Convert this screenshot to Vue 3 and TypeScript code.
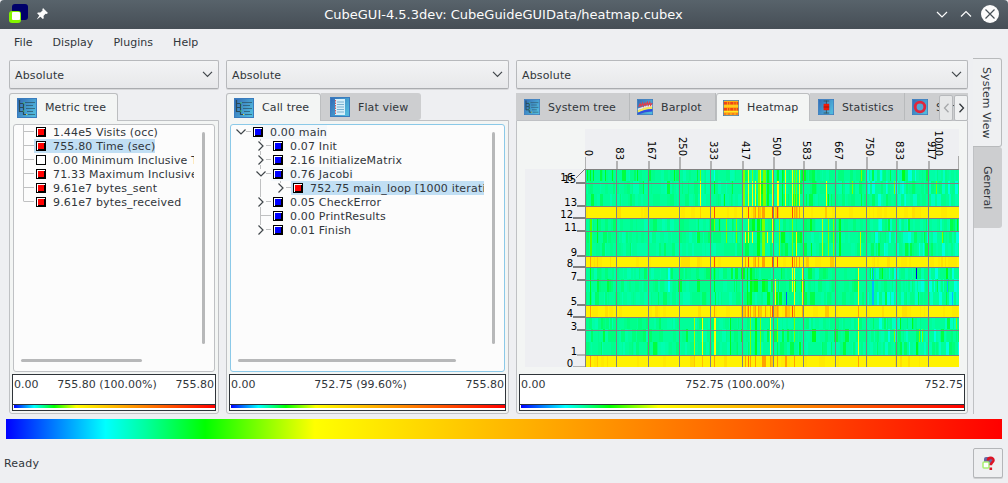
<script setup lang="ts">
interface TreeRow { label: string; depth: number; color: string; state?: 'open' | 'closed'; mark?: 'selected' | 'soft' }
interface Mark { x: number; rows: number[]; color: string; w?: number }

const metrics: TreeRow[] = [
  { label: '1.44e5 Visits (occ)', depth: 0, color: '#f00' },
  { label: '755.80 Time (sec)', depth: 0, color: '#f00', mark: 'selected' },
  { label: '0.00 Minimum Inclusive Time (sec)', depth: 0, color: '#fff' },
  { label: '71.33 Maximum Inclusive Time (sec)', depth: 0, color: '#f00' },
  { label: '9.61e7 bytes_sent', depth: 0, color: '#f00' },
  { label: '9.61e7 bytes_received', depth: 0, color: '#f00' },
]
const calls: TreeRow[] = [
  { label: '0.00 main', depth: 0, color: '#00f', state: 'open', mark: 'soft' },
  { label: '0.07 Init', depth: 1, color: '#00f', state: 'closed' },
  { label: '2.16 InitializeMatrix', depth: 1, color: '#00f', state: 'closed' },
  { label: '0.76 Jacobi', depth: 1, color: '#00f', state: 'open', mark: 'soft' },
  { label: '752.75 main_loop [1000 iterations]', depth: 2, color: '#f00', state: 'closed', mark: 'selected' },
  { label: '0.05 CheckError', depth: 1, color: '#00f', state: 'closed' },
  { label: '0.00 PrintResults', depth: 1, color: '#00f' },
  { label: '0.01 Finish', depth: 1, color: '#00f', state: 'closed' },
]
const menus = ['File', 'Display', 'Plugins', 'Help']

const panels = [
  { id: 'metric', tabs: [{ t: 'Metric tree', i: 'tree', on: true }], rows: metrics, min: '0.00', mid: '755.80 (100.00%)', max: '755.80' },
  { id: 'call', tabs: [{ t: 'Call tree', i: 'tree', on: true }, { t: 'Flat view', i: 'flat', on: false }], rows: calls, min: '0.00', mid: '752.75 (99.60%)', max: '755.80' },
  {
    id: 'system',
    tabs: [{ t: 'System tree', i: 'tree', on: false }, { t: 'Barplot', i: 'bar', on: false }, { t: 'Heatmap', i: 'heat', on: true }, { t: 'Statistics', i: 'stat', on: false }, { t: 'Sunburst', i: 'sun', on: false }],
    rows: [] as TreeRow[], min: '0.00', mid: '752.75 (100.00%)', max: '752.75',
  },
]

/* Heatmap: 16 rows from top to bottom, every fourth one is hot. */
const left = 60
const edges = [40, 52, 65, 77, 89, 102, 114, 127, 138, 150, 163, 176, 188, 200, 213, 226, 238]
const gridX = [60, 91, 123, 154, 185, 217, 248, 278, 310, 341, 371, 403]
const gridY = [40, 54, 77, 89, 102, 127, 138, 151, 176, 188, 201, 226]
const Y = '#ff0', L = '#7dff00', G = '#00ff1c', O = '#ffa200', R = '#ff4a00', C = '#00fff0', A = '#00b8ff'
const a = [0, 1, 2], b = [4, 5, 6], c = [8, 9, 10], d = [12, 13, 14]
const marks: Mark[] = [
  ...[62, 65, 68, 80, 87, 112, 149].map(x => ({ x, rows: [0], color: G })),
  { x: 189, rows: [0], color: C }, { x: 175, rows: [0], color: L }, { x: 175, rows: [1, 2], color: Y },
  { x: 189, rows: [1], color: G }, { x: 199, rows: [2], color: G },
  { x: 218, rows: a, color: L, w: 2 }, { x: 223, rows: a, color: Y }, { x: 227, rows: [1, 2], color: Y }, { x: 230, rows: [1, 2], color: Y },
  { x: 227, rows: [0], color: L }, { x: 233, rows: a, color: L, w: 2 }, { x: 235, rows: a, color: Y }, { x: 238, rows: a, color: L, w: 3 }, { x: 242, rows: a, color: G, w: 2 },
  { x: 247, rows: a, color: Y }, { x: 252, rows: [1, 2], color: Y, w: 2 }, { x: 260, rows: a, color: Y }, { x: 257, rows: a, color: G },
  { x: 267, rows: a, color: Y }, { x: 269, rows: a, color: L }, { x: 271, rows: a, color: L }, { x: 274, rows: a, color: Y },
  { x: 301, rows: [1, 2], color: Y }, { x: 303, rows: [2], color: G }, { x: 336, rows: [0], color: L }, { x: 327, rows: [1], color: L },
  { x: 369, rows: [1], color: L }, { x: 411, rows: [1], color: L }, { x: 377, rows: [0], color: G, w: 3 },
  { x: 65, rows: b, color: '#50ff00', w: 2 }, { x: 72, rows: [4, 5], color: G }, { x: 189, rows: [4], color: L }, { x: 194, rows: [4], color: G },
  { x: 201, rows: [4, 5], color: L }, { x: 211, rows: [4, 5], color: L }, { x: 220, rows: [5], color: Y }, { x: 223, rows: [4, 5], color: Y },
  { x: 227, rows: [5], color: Y }, { x: 232, rows: b, color: G, w: 3 }, { x: 237, rows: b, color: L, w: 3 }, { x: 242, rows: [5], color: Y },
  { x: 247, rows: [4, 5], color: Y }, { x: 254, rows: b, color: L }, { x: 267, rows: b, color: L }, { x: 271, rows: [5, 6], color: Y },
  { x: 297, rows: b, color: '#c0ff00' }, { x: 303, rows: b, color: L }, { x: 308, rows: b, color: L }, { x: 314, rows: b, color: G, w: 2 },
  { x: 335, rows: [5, 6], color: '#c0ff00' }, { x: 417, rows: [5], color: L }, { x: 432, rows: [4], color: G },
  { x: 65, rows: c, color: G }, { x: 143, rows: [8, 9], color: C, w: 2 }, { x: 189, rows: [8, 9], color: G },
  { x: 222, rows: c, color: G }, { x: 225, rows: c, color: G, w: 2 }, { x: 250, rows: [9, 10], color: Y }, { x: 261, rows: [10], color: '#0058ff' },
  { x: 267, rows: [8, 9], color: Y }, { x: 269, rows: c, color: Y }, { x: 277, rows: c, color: Y }, { x: 333, rows: c, color: Y },
  { x: 348, rows: [8], color: A }, { x: 347, rows: [9, 10], color: A, w: 2 }, { x: 357, rows: [8], color: G }, { x: 391, rows: [8], color: '#0000e8' },
  { x: 421, rows: [8], color: G, w: 2 }, { x: 422, rows: [9], color: A }, { x: 427, rows: [10], color: A },
  { x: 169, rows: d, color: '#a8ff00' }, { x: 177, rows: d, color: Y }, { x: 189, rows: d, color: Y, w: 2 }, { x: 205, rows: d, color: G },
  { x: 225, rows: d, color: L }, { x: 230, rows: d, color: G, w: 2 }, { x: 235, rows: d, color: L }, { x: 245, rows: d, color: Y, w: 1 },
  { x: 252, rows: [12, 13], color: L }, { x: 269, rows: [12, 13], color: L }, { x: 333, rows: d, color: Y }, { x: 369, rows: [13], color: L },
  { x: 375, rows: [12], color: G }, { x: 387, rows: [12], color: G }, { x: 394, rows: [13], color: L }, { x: 397, rows: [13], color: L }, { x: 431, rows: [12], color: L },
  { x: 391, rows: [14], color: G, w: 2 },
  { x: 175, rows: [3], color: '#ffd000' }, { x: 169, rows: [15], color: '#ffc800' }, { x: 177, rows: [15], color: '#ffc000' }, { x: 189, rows: [3, 7], color: R }, { x: 223, rows: [3, 7], color: R },
  { x: 233, rows: [3, 7, 11], color: O }, { x: 237, rows: [3, 7, 15], color: O, w: 3 }, { x: 247, rows: [3, 7, 11], color: R }, { x: 252, rows: [3, 7], color: R },
  { x: 267, rows: [3, 7, 11], color: R }, { x: 269, rows: [3, 7, 11, 15], color: O }, { x: 271, rows: [3, 7], color: O }, { x: 274, rows: [3, 7], color: O },
  { x: 301, rows: [3, 11], color: '#ffc800' }, { x: 65, rows: [7, 11, 15], color: O }, { x: 72, rows: [7, 15], color: '#ffd000' },
  { x: 189, rows: [11, 15], color: O }, { x: 225, rows: [11, 15], color: O }, { x: 220, rows: [7, 11, 15], color: O }, { x: 230, rows: [3, 7, 11, 15], color: O },
  { x: 228, rows: [3, 7, 11], color: '#ffc800', w: 2 }, { x: 223, rows: [11, 15], color: '#ff7a00' }, { x: 240, rows: [11, 15], color: O },
  { x: 245, rows: [15, 11], color: O }, { x: 252, rows: [11, 15], color: O }, { x: 260, rows: [11, 15], color: O, w: 2 }, { x: 277, rows: [11], color: O }, { x: 333, rows: [11, 15], color: O },
]

function heatPaths(): { color: string; d: string }[] {
  let seed = 4177
  const rnd = () => (seed = (seed * 16807) % 2147483647) / 2147483647
  const out = new Map<string, string>()
  const put = (color: string, x: number, row: number, w: number) => {
    const y = edges[row], h = edges[row + 1] - y
    out.set(color, (out.get(color) ?? '') + `M${x} ${y}h${w}v${h}h${-w}z`)
  }
  const cool = ['#00ff99', '#00ff8c', '#00ffa6', '#00ff7d', '#00ffb0', '#00ff68']
  for (let row = 0; row < 16; row++) {
    let x = left
    while (x < 434) {
      const w = Math.min(434 - x, 1 + Math.floor(rnd() * (x > 340 ? 3 : 4)))
      const r = rnd()
      let color: string
      if (row % 4 === 3) color = r < 0.75 ? '#fff200' : r < 0.93 ? '#ffea00' : x > 215 && x < 340 ? '#ffc800' : '#ffe000'
      else if (x > 340 && r > 0.76) color = r > 0.95 ? '#00ff48' : r > 0.86 ? '#00ffe0' : '#00ffc4'
      else if (x > 215 && x < 290 && r > 0.8) color = r > 0.93 ? '#00ff24' : '#00ff4c'
      else if (r > 0.975) color = '#00ff40'
      else color = cool[Math.min(5, Math.floor(rnd() * rnd() * 7))]
      put(color, x, row, w)
      x += w
    }
  }
  const paths = [...out].map(([color, d]) => ({ color, d }))
  for (const m of marks) {
    for (const row of m.rows) {
      const w = m.w ?? 1
      paths.push({ color: m.color, d: `M${m.x} ${edges[row]}h${w}v${edges[row + 1] - edges[row]}h${-w}z` })
    }
  }
  return paths
}
const heat = heatPaths()

const xLabels = [
  { t: '0', x: 60, e: 27 }, { t: '83', x: 91, e: 31 }, { t: '167', x: 123, e: 31 }, { t: '250', x: 154, e: 27 }, { t: '333', x: 185, e: 31 },
  { t: '417', x: 217, e: 31 }, { t: '500', x: 248, e: 27 }, { t: '583', x: 278, e: 31 }, { t: '667', x: 310, e: 31 }, { t: '750', x: 341, e: 27 },
  { t: '833', x: 371, e: 31 }, { t: '917', x: 403, e: 31 }, { t: '1000', x: 410, e: 27 },
]
const yLabels = [
  { t: '16', y: 53, x: 48 }, { t: '15', y: 55, x: 51 }, { t: '13', y: 78, x: 52 }, { t: '12', y: 90, x: 48 }, { t: '11', y: 103, x: 52 }, { t: '9', y: 128, x: 52 },
  { t: '8', y: 139, x: 48 }, { t: '7', y: 152, x: 52 }, { t: '5', y: 177, x: 52 }, { t: '4', y: 189, x: 48 }, { t: '3', y: 202, x: 52 }, { t: '1', y: 227, x: 52 }, { t: '0', y: 239, x: 48 },
]
</script>

<template>
  <div class="window">
    <header class="titlebar">
      <svg class="logo" width="50" height="29" viewBox="0 0 50 29">
        <rect x="12" y="4" width="16" height="16" rx="3" fill="#00006a" />
        <rect x="9" y="11" width="12" height="12" rx="3" fill="#82f400" />
        <rect x="12" y="12" width="8" height="8" rx="1" fill="#fff" />
        <path d="M43 8l5 5-1.500 1-1-.2-2 2.200.3 2.300-1 .8-2.400-2.400-3.200 2.500-.2-.3 2.300-3.300-2.200-2.300.9-.9 2.300.2 2.300-2-.3-.8z" fill="#fcfcfc" />
      </svg>
      <span class="title">CubeGUI-4.5.3dev: CubeGuideGUIData/heatmap.cubex</span>
      <svg class="controls" width="76" height="29" viewBox="0 0 76 29" fill="none" stroke="#fcfcfc" stroke-width="1.200">
        <path d="M5 12l5 5 5-5M29 16.500l5-5 5 5" />
        <circle cx="58" cy="14" r="9" fill="#fcfcfc" stroke="none" />
        <path d="M53.500 9.500l9 9m0-9l-9 9" stroke="#475057" />
      </svg>
    </header>

    <nav class="menu"><span v-for="m in menus" :key="m">{{ m }}</span></nav>

    <main class="work">
      <section v-for="p in panels" :key="p.id" class="panel" :class="p.id">
        <div class="combo">
          <span>Absolute</span>
          <svg width="11" height="7" viewBox="0 0 11 7"><path d="M1 .8l4.500 4.500L10 .8" fill="none" stroke="#40464a" stroke-width="1.200" /></svg>
        </div>
        <div class="tabs">
          <div v-for="t in p.tabs" :key="t.t" class="tab" :class="[t.i, { on: t.on }]">
            <svg class="ticon" viewBox="0 0 20 20">
              <defs><linearGradient id="icon-bg" x1="0" y1="0" x2="1" y2=".6"><stop offset="0" stop-color="#3269b5" /><stop offset="1" stop-color="#50b8dc" /></linearGradient></defs>
              <rect x=".5" y=".5" width="19" height="19" fill="url(#icon-bg)" stroke="#3a7cbe" />
              <g v-if="t.i === 'tree'" fill="none" stroke="#294a58">
                <path d="M2.500 2v11.500h4M2.500 5.500h4v11h3M3 9.500h3" stroke-width="1.200" />
                <path d="M8 4.500h10M9 7.500h7M9 10.500h9M10 13.500h6M11 16.500h7" opacity=".65" />
                <path d="M6 5h2M7 9h1M6 13h2" stroke="#3fc080" /><path d="M9 16.500h1" stroke="#e5d62c" />
              </g>
              <g v-else-if="t.i === 'flat'">
                <rect x="5" y="2" width="10" height="16" fill="#d6f0fa" /><path d="M7 5h7M7 7.500h7M7 10h7M7 12.500h7M7 15h7" stroke="#7ab0cf" /><path d="M5.500 3v14" stroke="#d35b61" stroke-dasharray="1.500 1" />
              </g>
              <g v-else-if="t.i === 'bar'" fill="none">
                <path d="M1 12q9-4 18-5v3Q9 11 1 14z" fill="#e9e6ee" /><path d="M1 14q9-4 18-4.500v3Q9 13 1 17z" fill="#f3e75a" /><path d="M1 17.500q9-5 18-5v3q-9 0-18 4z" fill="#304be0" /><path d="M2 10l2-4 1 3 2-4 1 4 2-4 1 3 2-4 1 4 2-4 1 4 2-3" stroke="#e33c48" stroke-width="1.400" />
              </g>
              <g v-else-if="t.i === 'heat'">
                <rect x="1" y="1" width="18" height="18" fill="#ffad12" /><path d="M1 4h18M1 11.500h18" stroke="#f04418" stroke-width="3" stroke-dasharray="4 1 2 1" /><path d="M1 7.500h18M1 14.500h18" stroke="#ffe928" stroke-width="1.500" /><path d="M1 17.500h18" stroke="#ed5328" stroke-width="1.500" stroke-dasharray="3 2" />
              </g>
              <g v-else-if="t.i === 'stat'"><path d="M10.500 2v16M7 2.500h7M7 17.500h7" stroke="#344750" /><rect x="7" y="6" width="7" height="8" fill="#f01809" /><path d="M7 10h7" stroke="#8b1710" /></g>
              <circle v-else cx="10" cy="10" r="6" fill="#54a7d4" stroke="#e0263c" stroke-width="3.500" />
            </svg>
            <span>{{ t.t }}</span>
          </div>
          <div v-if="p.id === 'system'" class="scrollers">
            <div class="sbtn dim"><svg width="7" height="10" viewBox="0 0 7 10"><path d="M5.500 .8L1.500 5l4 4.200" /></svg></div>
            <div class="sbtn"><svg width="7" height="10" viewBox="0 0 7 10"><path d="M1.500 .8l4 4.200-4 4.200" /></svg></div>
          </div>
        </div>

        <div class="pane">
          <div v-if="p.rows.length" class="tree">
            <div class="rows">
              <div v-for="(r, i) in p.rows" :key="r.label" class="row">
                <svg class="guide" :width="20 + r.depth * 20" height="14" fill="none" stroke="#c0c1c2">
                  <template v-if="p.id === 'metric'"><path :d="i === 5 ? 'M9.500 0v6.500' : 'M9.500 0v14'" /><path d="M10 6.500h10" /></template>
                  <g v-else transform="translate(2 0)">
                    <path v-if="r.depth > 0" :d="i === 7 ? 'M27.500 0v2' : r.depth === 2 || !r.state ? 'M27.500 0v14' : 'M27.500 0v2M27.500 12v2'" />
                    <path v-if="r.depth === 2" d="M47.500 0v2" />
                    <path :d="r.state ? `M${13 + r.depth * 20} 6.500h5` : 'M28 6.500h10'" />
                    <g stroke="#40464a" stroke-width="1.200">
                      <path v-if="r.state === 'open'" :d="`M${3.500 + r.depth * 20} 4.500l4.500 4.500 4.500-4.500`" />
                      <path v-if="r.state === 'closed'" :d="`M${5.500 + r.depth * 20} 2.500l4.500 4.500-4.500 4.500`" />
                    </g>
                  </g>
                </svg>
                <div class="item" :class="r.mark">
                  <svg width="10" height="10" viewBox="0 0 10 10"><rect width="10" height="10" /><path d="M1 1h8v8H1z" fill="#fff" /><path d="M2 2h7v7H2z" :fill="r.color === '#fff' ? '#fff' : '#000'" /><path d="M2 2h6v6H2z" :fill="r.color" /></svg>
                  <span>{{ r.label }}</span>
                </div>
              </div>
            </div>
            <i class="vbar"></i><i class="hbar"></i>
          </div>

          <svg v-else class="plot" width="434" height="238" viewBox="0 0 434 238">
            <path d="M60 0h374v40H60zM0 40h60v198H0z" fill="#eeeff2" />
            <g shape-rendering="crispEdges"><path v-for="(h, i) in heat" :key="i" :d="h.d" :fill="h.color" /></g>
            <g fill="#808080" shape-rendering="crispEdges">
              <rect v-for="x in gridX" :key="x" :x="x" y="40" width="1" height="198" />
              <rect v-for="y in gridY" :key="y" x="60" :y="y" width="374" height="1" />
            </g>
            <g shape-rendering="crispEdges">
              <rect v-for="l in xLabels.slice(0, 12)" :key="l.t" :x="l.x" :y="l.e + 1" :width="l.x === 60 ? 1 : 2" :height="39 - l.e" fill="#b2b2b3" />
              <rect x="433" y="27" width="1" height="13" fill="#aaa" />
              <rect v-for="l in yLabels.slice(1)" :key="l.t" :x="l.x" :y="l.y - 2" :width="60 - l.x" :height="l.t === '0' ? 1 : 2" :fill="l.y > 220 ? '#b4b4b4' : '#808080'" />
            </g>
            <path d="M60 40L51 49" stroke="#777" />
            <g class="plot-text">
              <text v-for="l in xLabels" :key="l.t" :transform="`translate(${l.x} ${l.e}) rotate(90)`" text-anchor="end">{{ l.t }}</text>
              <text v-for="l in yLabels" :key="l.t" :x="l.x" :y="l.y - 1" text-anchor="end">{{ l.t }}</text>
            </g>
          </svg>

          <div class="value"><div class="nums"><span>{{ p.min }}</span><span>{{ p.mid }}</span><span>{{ p.max }}</span></div><div class="scale"></div></div>
        </div>
      </section>
      <aside class="side"><div class="vtab on">System View</div><div class="vtab">General</div></aside>
    </main>

    <div class="scale legend"></div>
    <footer class="status">
      <span>Ready</span>
      <div class="help">
        <svg width="16" height="16" viewBox="0 0 16 16"><rect x="4" y="2" width="8" height="8" rx="2" fill="#6868a6" /><rect x="3" y="7" width="6" height="6" rx="1" fill="#fff" stroke="#a8ef70" stroke-width="1.500" /><path d="M8 5.500c0-3.500 5.500-3.500 5.500-.2 0 2.200-2.700 2-2.700 5M10.800 12.500v2.500" fill="none" stroke="#dc1425" stroke-width="2.600" /></svg>
      </div>
    </footer>
  </div>
</template>

<style>
body { margin: 0; overflow: hidden; background: #eeeff2; }
</style>
<style scoped>
* { box-sizing: border-box; }
.window { width: 1008px; height: 483px; display: flex; flex-direction: column; background: #eeeff2; color: #31363b; font: 11px "DejaVu Sans", sans-serif; white-space: nowrap; }
svg { display: block; flex: none; }
.titlebar { height: 29px; display: flex; align-items: center; justify-content: space-between; background: linear-gradient(#58636b, #464e56); color: #fcfcfc; border-radius: 4px 4px 0 0; flex: none; }
.title { font-size: 13px; padding-left: 25px; }
.menu { height: 31px; flex: none; display: flex; gap: 20px; padding: 7px 14px 0; letter-spacing: .04px; }
.work { height: 357px; flex: none; display: flex; gap: 7px; padding-left: 9px; }
.panel { display: flex; flex-direction: column; flex: none; height: 354px; }
.metric { width: 210px; }
.call { width: 283px; }
.system { width: 452px; }
.combo { height: 29px; flex: none; display: flex; align-items: center; justify-content: space-between; padding: 0 5px; border: 1px solid #b7b9bc; border-bottom-color: #aaacaf; border-radius: 2px; background: linear-gradient(#f3f4f5, #e7e8ea); box-shadow: 0 1px 0 #d7d8da; letter-spacing: .15px; }
.combo span { padding-top: 2px; }
.tabs { height: 28px; flex: none; margin-top: 4px; display: flex; position: relative; z-index: 1; overflow: hidden; letter-spacing: .12px; }
.tab { height: 27px; display: flex; align-items: center; background: #cdced0; padding: 1px 11px 0 9px; border-right: 1px solid #b8babc; flex: none; }
.tab.flat { width: 100px; border-radius: 0 3px 3px 0; border-right: 0; }
.tab.on { height: 28px; background: #f3f5f4; border: 1px solid #bcbec0; border-bottom: 0; border-radius: 3px 3px 0 0; padding: 0 11px 0 7px; }
.call .tab.on { width: 95px; padding-right: 0; }
.ticon { width: 20px; height: 20px; margin-right: 8px; }
.system .tab { padding-left: 7px; padding-right: 0; }
.system .tab.tree { width: 114px; padding-left: 8px; }
.system .tab.bar { width: 86px; }
.system .tab.heat { width: 94px; padding-left: 6px; }
.system .tab.stat { width: 95px; padding-left: 8px; }
.system .tab.sun { width: 90px; }
.system .ticon { width: 16px; height: 16px; }
.pane { margin-top: -1px; flex: 1; border: 1px solid #bfc1c4; border-radius: 0 0 3px 3px; background: #f3f5f4; padding: 3px 2px 2px; display: flex; flex-direction: column; min-height: 0; }
.tree.tab { min-width: 0; }
.pane .tree { height: 248px; flex: none; margin: 0 1px; border: 1px solid #bfc1c4; border-radius: 3px; background: #fcfcfc; position: relative; }
.call .pane .tree { border-color: #8bc9e8; }
.rows { margin-right: 20px; overflow: hidden; letter-spacing: .17px; }
.row { display: flex; height: 14px; }
.guide { overflow: visible; }
.item { height: 14px; display: flex; align-items: center; padding-left: 2px; }
.item span { margin-left: 7px; line-height: 14px; padding-top: 1px; }
.selected { background: #c1dff4; }
.soft { background: #f4f8fb; }
.vbar, .hbar { position: absolute; background: #b7b8b9; border-radius: 2px; }
.vbar { right: 9px; top: 7px; width: 3px; height: 212px; }
.hbar { left: 7px; bottom: 9px; height: 3px; width: 121px; }
.call .hbar { width: 218px; }
.plot { margin: 5px 0 0 6px; }
.plot-text { font: 10px "DejaVu Sans", sans-serif; fill: #000; }
.value { height: 37px; border: 1px solid #2f3439; background: #fff; margin-top: auto; display: flex; flex-direction: column; flex: none; }
.nums { display: flex; justify-content: space-between; height: 30px; padding: 3px 1px 0; border-bottom: 1px solid #2f3439; }
.scale { height: 4px; background: linear-gradient(90deg, #00f, #0ff 10%, #00ffa0 14%, #0f0 20%, #ff0 31%, #f00); }
.value .scale { margin-left: 1px; height: 3px; flex: none; }
.side { margin-left: -2px; width: 29px; height: 356px; margin-top: -2px; border-left: 1px solid #bfc1c4; display: flex; flex-direction: column; }
.vtab { writing-mode: vertical-rl; width: 28px; height: 81px; line-height: 26px; padding-right: 2px; text-align: center; background: #cdced0; border-radius: 0 3px 3px 0; }
.vtab.on { height: 89px; margin-left: -1px; width: 29px; padding-right: 2px; letter-spacing: .1px; background: #eff0f2; border: 1px solid #b8babc; border-left: 0; }
.scrollers { position: absolute; right: 0; top: 2px; display: flex; gap: 1px; }
.sbtn { width: 14px; height: 26px; border: 1px solid #b7b9bc; border-radius: 2px; background: #f0f1f2; display: flex; align-items: center; justify-content: center; }
.sbtn path { fill: none; stroke: #31363b; stroke-width: 1.3; }
.sbtn.dim path { stroke: #a6a8aa; }
.dim { background: #e6e7e8; }
.legend { height: 20px; margin: 2px 6px 0; flex: none; }
.status { flex: 1; display: flex; justify-content: space-between; align-items: center; padding: 4px 5px 0 4px; letter-spacing: .2px; }
.help { width: 30px; height: 30px; border: 1px solid #b4b6b9; border-radius: 2px; background: #eeeff1; display: flex; align-items: center; justify-content: center; box-shadow: 0 1px #cfd0d2; }
</style>
